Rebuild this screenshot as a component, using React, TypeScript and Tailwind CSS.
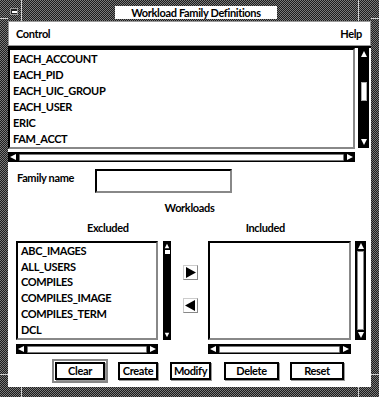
import React from "react";

const families = ["EACH_ACCOUNT", "EACH_PID", "EACH_UIC_GROUP", "EACH_USER", "ERIC", "FAM_ACCT"];
const excluded = ["ABC_IMAGES", "ALL_USERS", "COMPILES", "COMPILES_IMAGE", "COMPILES_TERM", "DCL"];

function Tri({ dir, className }: { dir: "up" | "down" | "left" | "right"; className?: string }) {
    const pts = {
        up: "4,1 7,7 1,7",
        down: "1,1 7,1 4,7",
        left: "1,4 7,1 7,7",
        right: "1,1 7,4 1,7",
    }[dir];
    return (
        <svg width="8" height="8" viewBox="0 0 8 8" className={className}>
            <polygon points={pts} fill="currentColor" />
        </svg>
    );
}

function HScroll({ width }: { width: string }) {
    return (
        <div className={`${width} h-[10px] bg-black flex items-center px-[1px]`}>
            <Tri dir="left" className="text-white shrink-0" />
            <div className="flex-1 h-[7px] mx-[2px] bg-white border border-[#777] rounded-[1px]" />
            <Tri dir="right" className="text-white shrink-0" />
        </div>
    );
}

function Btn({ label, width }: { label: string; width: string }) {
    return (
        <div className={`${width} h-[18px] border-2 border-black bg-white flex items-center justify-center shadow-[1px_1px_0_#999]`}>
            {label}
        </div>
    );
}

export default function App() {
    return (
        <div className="relative w-[379px] h-[397px] bg-[image:repeating-conic-gradient(#1c1c1c_0_25%,#7a7a7a_0_50%)] bg-[length:2px_2px] font-['Lato',sans-serif] font-bold text-[11px] tracking-[-0.35px] leading-[16px] text-black overflow-hidden">
            {/* frame resize marks */}
            <div className="absolute left-[21px] top-0 w-[1px] h-[21px] bg-[#d0d0d0]" />
            <div className="absolute left-[358px] top-0 w-[1px] h-[21px] bg-[#d0d0d0]" />
            <div className="absolute left-[21px] top-[387px] w-[1px] h-[10px] bg-[#d0d0d0]" />
            <div className="absolute left-[358px] top-[387px] w-[1px] h-[10px] bg-[#d0d0d0]" />
            <div className="absolute left-0 top-[18px] w-[8px] h-[1px] bg-[#d0d0d0]" />
            <div className="absolute right-0 top-[18px] w-[8px] h-[1px] bg-[#d0d0d0]" />
            <div className="absolute left-0 top-[374px] w-[8px] h-[1px] bg-[#d0d0d0]" />
            <div className="absolute right-0 top-[374px] w-[8px] h-[1px] bg-[#d0d0d0]" />

            {/* title bar */}
            <div className="h-[21px] flex items-start">
                <div className="ml-[10px] mt-[8px] w-[8px] h-[7px] bg-[#222] border border-[#999] flex items-center justify-center">
                    <div className="w-[5px] h-[2px] bg-white" />
                </div>
                <div className="ml-[97px] mt-[6px] w-[162px] h-[13px] bg-white flex items-center justify-center leading-[13px]">
                    Workload Family Definitions
                </div>
            </div>

            {/* window body */}
            <div className="ml-[8px] w-[363px] h-[366px] bg-white flex flex-col">
                <div className="h-[25px] border border-[#999] flex items-center justify-between pl-[7px] pr-[8px]">
                    <span>Control</span>
                    <span>Help</span>
                </div>
                <div className="h-[2px] bg-black" />

                <div className="flex h-[101px]">
                    <div className="w-[347px] h-[101px] border-2 border-black border-b-[#888] border-r-[#888] pl-[3px] pt-[1px]">
                        {families.map((f) => (
                            <div key={f}>{f}</div>
                        ))}
                    </div>
                    <div className="ml-[3px] w-[11px] h-[100px] bg-black flex flex-col items-center justify-between py-[2px]">
                        <Tri dir="up" className="text-white" />
                        <div className="flex-1 flex flex-col items-center">
                            <div className="mt-[24px] w-[6px] h-[19px] bg-white border border-[#aaa]" />
                        </div>
                        <Tri dir="down" className="text-white" />
                    </div>
                </div>
                <div className="mt-[3px]">
                    <HScroll width="w-[347px]" />
                </div>

                <div className="mt-[7px] flex items-center h-[24px]">
                    <div className="w-[87px] pl-[9px] -mt-[7px]">Family name</div>
                    <div className="w-[137px] h-[24px] border-2 border-black border-b-[#888] border-r-[#888]" />
                </div>

                <div className="mt-[7px] text-center">Workloads</div>
                <div className="mt-[4px] flex">
                    <div className="ml-[79px]">Excluded</div>
                    <div className="ml-[117px]">Included</div>
                </div>

                <div className="mt-[5px] flex h-[99px]">
                    <div className="ml-[8px] w-[142px] h-[99px] border-2 border-black border-b-[#888] border-r-[#888] pl-[3px]">
                        {excluded.map((f) => (
                            <div key={f} className="leading-[15.7px]">{f}</div>
                        ))}
                    </div>
                    <div className="ml-[5px] w-[8px] h-[99px] bg-black flex flex-col items-center justify-between py-[2px]">
                        <Tri dir="up" className="text-white w-[6px] h-[6px]" />
                        <div className="flex-1 flex flex-col items-center">
                            <div className="mt-[1px] w-[5px] h-[4px] bg-white" />
                        </div>
                        <Tri dir="down" className="text-white w-[6px] h-[6px]" />
                    </div>

                    <div className="ml-[12px] flex flex-col">
                        <div className="mt-[24px] w-[15px] h-[15px] bg-white border border-[#888] border-t-[#ccc] border-l-[#ccc] flex items-center justify-center">
                            <svg width="11" height="11" viewBox="0 0 11 11">
                                <polygon points="1,0 11,5.5 1,11" fill="black" />
                            </svg>
                        </div>
                        <div className="mt-[18px] w-[15px] h-[15px] bg-white border border-[#888] border-t-[#ccc] border-l-[#ccc] flex items-center justify-center">
                            <svg width="11" height="11" viewBox="0 0 11 11">
                                <polygon points="10,0 0,5.5 10,11" fill="black" />
                            </svg>
                        </div>
                    </div>

                    <div className="ml-[10px] w-[143px] h-[99px] border-2 border-black border-b-[#888] border-r-[#888]" />
                    <div className="ml-[4px] w-[11px] h-[99px] bg-black flex flex-col items-center py-[1px]">
                        <Tri dir="up" className="text-white" />
                        <div className="flex-1 w-[7px] my-[1px] bg-white border border-[#888]" />
                        <Tri dir="down" className="text-white" />
                    </div>
                </div>

                <div className="mt-[4px] flex">
                    <div className="ml-[8px]">
                        <HScroll width="w-[142px]" />
                    </div>
                    <div className="ml-[50px]">
                        <HScroll width="w-[143px]" />
                    </div>
                </div>

                <div className="mt-[5px] flex items-center">
                    <div className="ml-[44px] p-[1px] border-2 border-[#888]">
                        <Btn label="Clear" width="w-[50px]" />
                    </div>
                    <div className="ml-[10px]">
                        <Btn label="Create" width="w-[40px]" />
                    </div>
                    <div className="ml-[12px]">
                        <Btn label="Modify" width="w-[41px]" />
                    </div>
                    <div className="ml-[13px]">
                        <Btn label="Delete" width="w-[55px]" />
                    </div>
                    <div className="ml-[11px]">
                        <Btn label="Reset" width="w-[54px]" />
                    </div>
                </div>
            </div>
        </div>
    );
}
